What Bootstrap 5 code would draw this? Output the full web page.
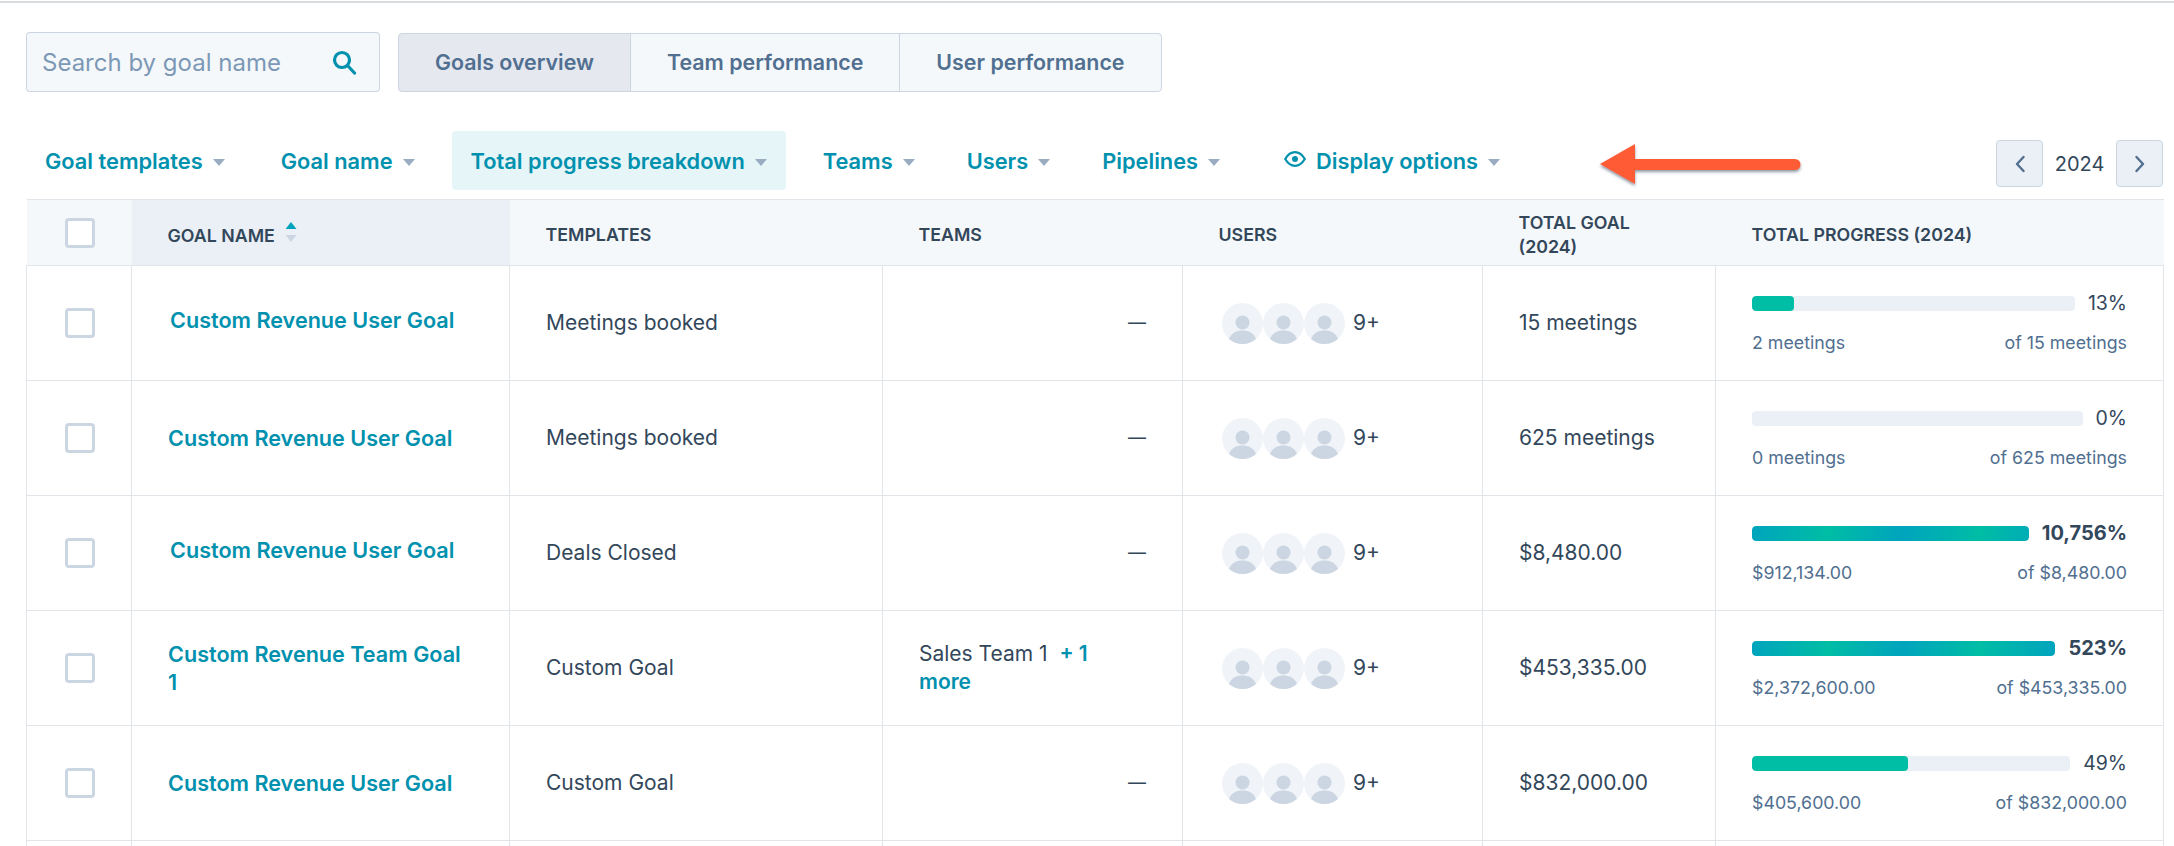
<!DOCTYPE html>
<html lang="en">
<head>
  <meta charset="UTF-8" />
  <meta name="viewport" content="width=device-width, initial-scale=1.0" />
  <title>Goals</title>
  <link href="https://cdn.jsdelivr.net/npm/bootstrap@5.3.2/dist/css/bootstrap.min.css" rel="stylesheet">
  <style>
    html, body { height: 846px; overflow: hidden; }
    body {
      font-family: "Inter", "Liberation Sans", sans-serif;
      font-size: 21px;
      color: #33475b;
      background: #fff;
    }
    .top-rule { height: 2px; margin-top: 1px; background: #d9dcdf; }
    .page-wrap { padding: 29px 11px 0 26px; }

    /* search + tabs */
    .goal-search { width: 354px; height: 60px; flex: none; }
    .goal-search .form-control,
    .goal-search .input-group-text {
      background: #f5f8fa;
      border-color: #cbd6e2;
      border-radius: 4px;
      font-size: 24px;
      color: #33475b;
    }
    .goal-search .form-control { padding: 1px 0 0 15px; border-right: 0; box-shadow: none; }
    .goal-search .form-control::placeholder { color: #7c98b6; opacity: 1; }
    .goal-search .input-group-text { padding: 0 22px 0 8px; border-left: 0; }
    .view-tabs { height: 59px; margin: 1px 0 0 2px; }
    .view-tabs .btn {
      padding: 0 36px;
      font-size: 21.4px;
      font-weight: 600;
      color: #516f90;
      background: #f5f8fa;
      border-color: #cbd6e2;
      border-radius: 4px;
    }
    .view-tabs .btn.active { background: #e5e8ef; color: #516f90; border-color: #cbd6e2; }

    /* filters */
    .filter-bar { position: relative; margin-top: 39px; height: 59px; }
    .filter-list { column-gap: 18px; }
    .filter-btn {
      height: 59px;
      padding: 2px 19px 0;
      font-size: 21.8px;
      font-weight: 600;
      color: #0091ae;
      border: 0;
      border-radius: 4px;
      background: transparent;
    }
    .filter-btn:hover { color: #0091ae; }
    .filter-btn.current { background: #e5f5f8; }
    .filter-btn.dropdown-toggle::after {
      margin-left: 10px;
      vertical-align: 3px;
      border-top: 7px solid #99acc2;
      border-left: 6px solid transparent;
      border-right: 6px solid transparent;
      border-bottom: 0;
    }
    .filter-tight { margin-left: -4px; }
    .display-btn { margin-left: 8px; }
    .display-btn svg { margin-right: 10px; vertical-align: 2px; }
    .year-pager { margin-top: 9px; font-size: 20px; height: 47px; }
    .year-pager .btn {
      width: 47px;
      height: 47px;
      padding: 0;
      background: #eaf0f6;
      border-color: #cbd6e2;
      border-radius: 4px;
      display: flex;
      align-items: center;
      justify-content: center;
    }
    .year-label { width: 73px; text-align: center; line-height: 49px; }
    .note-arrow { position: absolute; left: 1568px; top: 10px; }

    /* table */
    .goals-table {
      --bs-table-border-color: #e1e4e8;
      width: 2137px;
      margin: 9px 0 0;
      table-layout: fixed;
      color: #33475b;
      --bs-table-color: #33475b;
    }
    .c-check { width: 105px; }
    .c-name { width: 378px; }
    .c-tmpl { width: 373px; }
    .c-team { width: 300px; }
    .c-user { width: 300px; }
    .c-goal { width: 233px; }
    .c-prog { width: 448px; }
    .goals-table th {
      height: 66px;
      padding: 5px 36px 0;
      vertical-align: middle;
      background: #f5f8fa;
      --bs-table-bg: #f5f8fa;
      border-left-width: 0;
      border-right-width: 0;
      font-size: 17.8px;
      font-weight: 600;
      line-height: 24px;
      text-transform: uppercase;
    }
    .goals-table th.sorted { background: #eaf0f6; --bs-table-bg: #eaf0f6; }
    .goals-table td {
      height: 115px;
      padding: 0 36px;
      vertical-align: middle;
      line-height: 28px;
    }
    .goals-table .check-cell { padding: 0 0 0 2px; text-align: center; }
    .goals-table .form-check-input {
      width: 30px;
      height: 30px;
      margin: 0;
      float: none;
      border: 3px solid #cbd6e2;
      border-radius: 4px;
      vertical-align: middle;
    }
    .sort-carets { margin-left: 6px; vertical-align: 0; }
    .goal-link { font-size: 21.6px; font-weight: 600; color: #0091ae; text-decoration: none; display: block; }
    .goal-link.nudged { padding: 0 0 7px 2px; }
    .more-link { font-weight: 600; color: #0091ae; text-decoration: none; }
    .goals-table td.empty-dash { text-align: right; font-size: 18px; }
    .avatar-row { display: flex; align-items: center; margin-left: 3px; }
    .avatar-row svg { flex: none; }
    .avatar-row span { margin-left: 8px; }
    .bar-line { display: flex; align-items: center; gap: 13px; }
    .bar-line .progress { flex: 1 1 auto; height: 15px; background: #eaf0f6; border-radius: 4px; }
    .bar-line .progress-bar { background: #00bda5; border-radius: 4px; }
    .bar-line .progress-bar.over {
      background: repeating-linear-gradient(100deg, #00a4bd 0, #00bda5 75px, #00a4bd 150px);
    }
    .bar-pct { font-size: 19.5px; line-height: 24px; white-space: nowrap; }
    .bar-pct.over { font-size: 20px; font-weight: 700; }
    .bar-text {
      display: flex;
      justify-content: space-between;
      margin-top: 16px;
      font-size: 17.8px;
      line-height: 24px;
      color: #516f90;
    }
  </style>
</head>
<body>

<svg width="0" height="0" class="d-block position-absolute">
  <symbol id="avatar" viewBox="0 0 41 41">
    <circle cx="20.5" cy="20.5" r="20.5" fill="#f0f3f8"/>
    <circle cx="20.5" cy="19.5" r="7" fill="#cbd6e2"/>
    <path d="M7 36c2-6 7.500-8.500 13.500-8.500S32 30 34 36c-3.500 3-8.500 5-13.500 5S10.500 39 7 36z" fill="#cbd6e2"/>
  </symbol>
</svg>

<div class="top-rule"></div>

<div class="page-wrap">
  <div class="d-flex gap-3">
    <div class="input-group goal-search">
      <input type="text" class="form-control" placeholder="Search by goal name">
      <span class="input-group-text">
        <svg width="25" height="25" viewBox="0 0 25 25" fill="none" stroke="#0091ae" stroke-width="3.2" stroke-linecap="round">
          <circle cx="10" cy="10" r="7.500"/>
          <path d="M15.500 15.500L22.500 23"/>
        </svg>
      </span>
    </div>
    <div class="btn-group view-tabs">
      <button type="button" class="btn active">Goals overview</button>
      <button type="button" class="btn">Team performance</button>
      <button type="button" class="btn">User performance</button>
    </div>
  </div>

  <div class="filter-bar d-flex justify-content-between">
    <div class="d-flex filter-list">
      <button type="button" class="btn filter-btn dropdown-toggle">Goal templates</button>
      <button type="button" class="btn filter-btn dropdown-toggle">Goal name</button>
      <button type="button" class="btn filter-btn dropdown-toggle current">Total progress breakdown</button>
      <button type="button" class="btn filter-btn dropdown-toggle">Teams</button>
      <button type="button" class="btn filter-btn dropdown-toggle filter-tight">Users</button>
      <button type="button" class="btn filter-btn dropdown-toggle filter-tight">Pipelines</button>
      <button type="button" class="btn filter-btn dropdown-toggle display-btn">
        <svg width="22" height="16" viewBox="0 0 22 16" fill="none" stroke="#0091ae" stroke-width="2.200">
          <path d="M1.200 8c2.700-4.500 6-6.800 9.800-6.800s7.100 2.300 9.800 6.800c-2.700 4.500-6 6.800-9.800 6.800S3.900 12.500 1.200 8z"/>
          <circle cx="11" cy="8" r="3" fill="#0091ae" stroke="none"/>
        </svg>Display options</button>
    </div>
    <div class="year-pager d-flex align-items-start">
      <button type="button" class="btn" aria-label="Previous year">
        <svg width="12" height="20" viewBox="0 0 12 20" fill="none" stroke="#516f90" stroke-width="2.400" stroke-linecap="round" stroke-linejoin="round"><path d="M9.500 3L3 10l6.500 7"/></svg>
      </button>
      <div class="year-label">2024</div>
      <button type="button" class="btn" aria-label="Next year">
        <svg width="12" height="20" viewBox="0 0 12 20" fill="none" stroke="#516f90" stroke-width="2.400" stroke-linecap="round" stroke-linejoin="round"><path d="M2.500 3L9 10l-6.500 7"/></svg>
      </button>
    </div>
    <svg class="note-arrow" width="210" height="48" viewBox="0 0 210 48">
      <defs>
        <filter id="arrowShade" x="-5%" y="-20%" width="110%" height="150%">
          <feDropShadow dx="0" dy="2" stdDeviation="1.500" flood-color="#33475b" flood-opacity=".55"/>
        </filter>
      </defs>
      <path d="M6 23L41 3v15h160a5.500 5.500 0 0 1 0 11H41v14z" fill="#ff5c35" filter="url(#arrowShade)"/>
    </svg>
  </div>

  <table class="table table-bordered goals-table">
    <colgroup>
      <col class="c-check"><col class="c-name"><col class="c-tmpl"><col class="c-team"><col class="c-user"><col class="c-goal"><col class="c-prog">
    </colgroup>
    <thead>
      <tr>
        <th class="check-cell"><input class="form-check-input" type="checkbox" aria-label="Select all"></th>
        <th class="sorted">Goal name
          <svg class="sort-carets" width="12" height="20" viewBox="0 0 12 20"><path d="M6 0l5.500 7H.500z" fill="#00a4bd"/><path d="M6 20L.500 13h11z" fill="#cbd6e2"/></svg>
        </th>
        <th>Templates</th>
        <th>Teams</th>
        <th>Users</th>
        <th>Total goal<br>(2024)</th>
        <th>Total progress (2024)</th>
      </tr>
    </thead>
    <tbody>
      <tr>
        <td class="check-cell"><input class="form-check-input" type="checkbox" aria-label="Select row"></td>
        <td><a href="#" class="goal-link nudged">Custom Revenue User Goal</a></td>
        <td>Meetings booked</td>
        <td class="empty-dash">—</td>
        <td><div class="avatar-row"><svg width="41" height="41"><use href="#avatar"/></svg><svg width="41" height="41"><use href="#avatar"/></svg><svg width="41" height="41"><use href="#avatar"/></svg><span>9+</span></div></td>
        <td>15 meetings</td>
        <td>
          <div class="bar-line"><div class="progress"><div class="progress-bar" style="width: 13%"></div></div><span class="bar-pct">13%</span></div>
          <div class="bar-text"><span>2 meetings</span><span>of 15 meetings</span></div>
        </td>
      </tr>
      <tr>
        <td class="check-cell"><input class="form-check-input" type="checkbox" aria-label="Select row"></td>
        <td><a href="#" class="goal-link">Custom Revenue User Goal</a></td>
        <td>Meetings booked</td>
        <td class="empty-dash">—</td>
        <td><div class="avatar-row"><svg width="41" height="41"><use href="#avatar"/></svg><svg width="41" height="41"><use href="#avatar"/></svg><svg width="41" height="41"><use href="#avatar"/></svg><span>9+</span></div></td>
        <td>625 meetings</td>
        <td>
          <div class="bar-line"><div class="progress"><div class="progress-bar" style="width: 0%"></div></div><span class="bar-pct">0%</span></div>
          <div class="bar-text"><span>0 meetings</span><span>of 625 meetings</span></div>
        </td>
      </tr>
      <tr>
        <td class="check-cell"><input class="form-check-input" type="checkbox" aria-label="Select row"></td>
        <td><a href="#" class="goal-link nudged">Custom Revenue User Goal</a></td>
        <td>Deals Closed</td>
        <td class="empty-dash">—</td>
        <td><div class="avatar-row"><svg width="41" height="41"><use href="#avatar"/></svg><svg width="41" height="41"><use href="#avatar"/></svg><svg width="41" height="41"><use href="#avatar"/></svg><span>9+</span></div></td>
        <td>$8,480.00</td>
        <td>
          <div class="bar-line"><div class="progress"><div class="progress-bar over" style="width: 100%"></div></div><span class="bar-pct over">10,756%</span></div>
          <div class="bar-text"><span>$912,134.00</span><span>of $8,480.00</span></div>
        </td>
      </tr>
      <tr>
        <td class="check-cell"><input class="form-check-input" type="checkbox" aria-label="Select row"></td>
        <td><a href="#" class="goal-link">Custom Revenue Team Goal<br>1</a></td>
        <td>Custom Goal</td>
        <td>Sales Team 1 &nbsp;<a href="#" class="more-link">+ 1<br>more</a></td>
        <td><div class="avatar-row"><svg width="41" height="41"><use href="#avatar"/></svg><svg width="41" height="41"><use href="#avatar"/></svg><svg width="41" height="41"><use href="#avatar"/></svg><span>9+</span></div></td>
        <td>$453,335.00</td>
        <td>
          <div class="bar-line"><div class="progress"><div class="progress-bar over" style="width: 100%"></div></div><span class="bar-pct over">523%</span></div>
          <div class="bar-text"><span>$2,372,600.00</span><span>of $453,335.00</span></div>
        </td>
      </tr>
      <tr>
        <td class="check-cell"><input class="form-check-input" type="checkbox" aria-label="Select row"></td>
        <td><a href="#" class="goal-link">Custom Revenue User Goal</a></td>
        <td>Custom Goal</td>
        <td class="empty-dash">—</td>
        <td><div class="avatar-row"><svg width="41" height="41"><use href="#avatar"/></svg><svg width="41" height="41"><use href="#avatar"/></svg><svg width="41" height="41"><use href="#avatar"/></svg><span>9+</span></div></td>
        <td>$832,000.00</td>
        <td>
          <div class="bar-line"><div class="progress"><div class="progress-bar" style="width: 49%"></div></div><span class="bar-pct">49%</span></div>
          <div class="bar-text"><span>$405,600.00</span><span>of $832,000.00</span></div>
        </td>
      </tr>
      <tr>
        <td></td><td></td><td></td><td></td><td></td><td></td><td></td>
      </tr>
    </tbody>
  </table>
</div>

<script src="https://cdn.jsdelivr.net/npm/bootstrap@5.3.2/dist/js/bootstrap.bundle.min.js"></script>
</body>
</html>
